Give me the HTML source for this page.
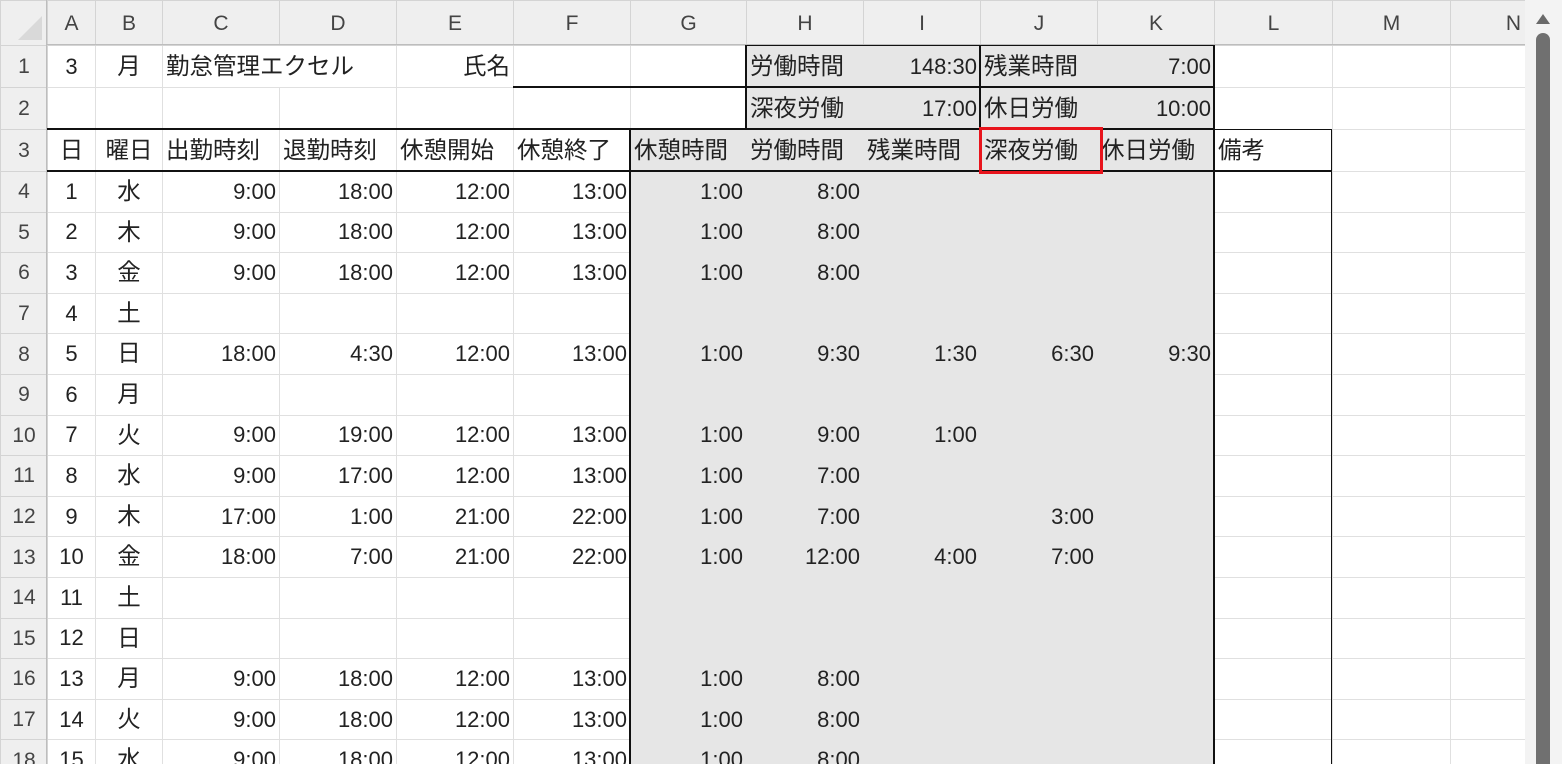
<!DOCTYPE html>
<html><head><meta charset="utf-8"><style>
*{margin:0;padding:0;box-sizing:border-box}
html,body{width:1562px;height:764px;overflow:hidden}
body{background:#fff;position:relative;font-family:"Liberation Sans","Noto Sans CJK JP",sans-serif;color:#222}
table{position:absolute;left:0;top:0;border-collapse:collapse;table-layout:fixed;width:1525px}
td{border:1px solid #e0e0e0;font-size:22px;padding:0 3px;white-space:nowrap;overflow:hidden;vertical-align:middle;line-height:1}
td.r{text-align:right}
td.c{text-align:center}
tr.h td{background:#efefef;color:#444;text-align:center;border-color:#d4d4d4;font-size:21px}
td.rh{background:#efefef;color:#444;text-align:center;border-color:#d4d4d4;font-size:21px;padding:0}
td.g{background:#e6e6e6;border-color:#e6e6e6}
.j{font-size:23.5px;letter-spacing:0}
.b{position:absolute;background:#111}
</style></head><body>
<table>
<colgroup><col style="width:47px"><col style="width:48px"><col style="width:67px"><col style="width:117px"><col style="width:117px"><col style="width:117px"><col style="width:117px"><col style="width:116px"><col style="width:117px"><col style="width:117px"><col style="width:117px"><col style="width:117px"><col style="width:118px"><col style="width:118px"><col style="width:75px"></colgroup>
<tr class="h" style="height:45px"><td style="background:#efefef"></td><td>A</td><td>B</td><td>C</td><td>D</td><td>E</td><td>F</td><td>G</td><td>H</td><td>I</td><td>J</td><td>K</td><td>L</td><td>M</td><td style="text-align:right;padding-right:4px">N</td></tr>
<tr style="height:42px"><td class="rh">1</td><td class="c">3</td><td class="c j">月</td><td class="j" colspan="2">勤怠管理エクセル</td><td class="r j">氏名</td><td></td><td></td><td class="g j">労働時間</td><td class="g r">148:30</td><td class="g j">残業時間</td><td class="g r">7:00</td><td></td><td></td><td></td></tr>
<tr style="height:42px"><td class="rh">2</td><td></td><td></td><td></td><td></td><td></td><td></td><td></td><td class="g j">深夜労働</td><td class="g r">17:00</td><td class="g j">休日労働</td><td class="g r">10:00</td><td></td><td></td><td></td></tr>
<tr style="height:42px"><td class="rh">3</td><td class="c j">日</td><td class="c j">曜日</td><td class="j">出勤時刻</td><td class="j">退勤時刻</td><td class="j">休憩開始</td><td class="j">休憩終了</td><td class="g j">休憩時間</td><td class="g j">労働時間</td><td class="g j">残業時間</td><td class="g j">深夜労働</td><td class="g j">休日労働</td><td class="j">備考</td><td></td><td></td></tr>
<tr style="height:40.6px"><td class="rh">4</td><td class="c">1</td><td class="c j">水</td><td class="r">9:00</td><td class="r">18:00</td><td class="r">12:00</td><td class="r">13:00</td><td class="g r">1:00</td><td class="g r">8:00</td><td class="g"></td><td class="g"></td><td class="g"></td><td></td><td></td><td></td></tr>
<tr style="height:40.6px"><td class="rh">5</td><td class="c">2</td><td class="c j">木</td><td class="r">9:00</td><td class="r">18:00</td><td class="r">12:00</td><td class="r">13:00</td><td class="g r">1:00</td><td class="g r">8:00</td><td class="g"></td><td class="g"></td><td class="g"></td><td></td><td></td><td></td></tr>
<tr style="height:40.6px"><td class="rh">6</td><td class="c">3</td><td class="c j">金</td><td class="r">9:00</td><td class="r">18:00</td><td class="r">12:00</td><td class="r">13:00</td><td class="g r">1:00</td><td class="g r">8:00</td><td class="g"></td><td class="g"></td><td class="g"></td><td></td><td></td><td></td></tr>
<tr style="height:40.6px"><td class="rh">7</td><td class="c">4</td><td class="c j">土</td><td></td><td></td><td></td><td></td><td class="g"></td><td class="g"></td><td class="g"></td><td class="g"></td><td class="g"></td><td></td><td></td><td></td></tr>
<tr style="height:40.6px"><td class="rh">8</td><td class="c">5</td><td class="c j">日</td><td class="r">18:00</td><td class="r">4:30</td><td class="r">12:00</td><td class="r">13:00</td><td class="g r">1:00</td><td class="g r">9:30</td><td class="g r">1:30</td><td class="g r">6:30</td><td class="g r">9:30</td><td></td><td></td><td></td></tr>
<tr style="height:40.6px"><td class="rh">9</td><td class="c">6</td><td class="c j">月</td><td></td><td></td><td></td><td></td><td class="g"></td><td class="g"></td><td class="g"></td><td class="g"></td><td class="g"></td><td></td><td></td><td></td></tr>
<tr style="height:40.6px"><td class="rh">10</td><td class="c">7</td><td class="c j">火</td><td class="r">9:00</td><td class="r">19:00</td><td class="r">12:00</td><td class="r">13:00</td><td class="g r">1:00</td><td class="g r">9:00</td><td class="g r">1:00</td><td class="g"></td><td class="g"></td><td></td><td></td><td></td></tr>
<tr style="height:40.6px"><td class="rh">11</td><td class="c">8</td><td class="c j">水</td><td class="r">9:00</td><td class="r">17:00</td><td class="r">12:00</td><td class="r">13:00</td><td class="g r">1:00</td><td class="g r">7:00</td><td class="g"></td><td class="g"></td><td class="g"></td><td></td><td></td><td></td></tr>
<tr style="height:40.6px"><td class="rh">12</td><td class="c">9</td><td class="c j">木</td><td class="r">17:00</td><td class="r">1:00</td><td class="r">21:00</td><td class="r">22:00</td><td class="g r">1:00</td><td class="g r">7:00</td><td class="g"></td><td class="g r">3:00</td><td class="g"></td><td></td><td></td><td></td></tr>
<tr style="height:40.6px"><td class="rh">13</td><td class="c">10</td><td class="c j">金</td><td class="r">18:00</td><td class="r">7:00</td><td class="r">21:00</td><td class="r">22:00</td><td class="g r">1:00</td><td class="g r">12:00</td><td class="g r">4:00</td><td class="g r">7:00</td><td class="g"></td><td></td><td></td><td></td></tr>
<tr style="height:40.6px"><td class="rh">14</td><td class="c">11</td><td class="c j">土</td><td></td><td></td><td></td><td></td><td class="g"></td><td class="g"></td><td class="g"></td><td class="g"></td><td class="g"></td><td></td><td></td><td></td></tr>
<tr style="height:40.6px"><td class="rh">15</td><td class="c">12</td><td class="c j">日</td><td></td><td></td><td></td><td></td><td class="g"></td><td class="g"></td><td class="g"></td><td class="g"></td><td class="g"></td><td></td><td></td><td></td></tr>
<tr style="height:40.6px"><td class="rh">16</td><td class="c">13</td><td class="c j">月</td><td class="r">9:00</td><td class="r">18:00</td><td class="r">12:00</td><td class="r">13:00</td><td class="g r">1:00</td><td class="g r">8:00</td><td class="g"></td><td class="g"></td><td class="g"></td><td></td><td></td><td></td></tr>
<tr style="height:40.6px"><td class="rh">17</td><td class="c">14</td><td class="c j">火</td><td class="r">9:00</td><td class="r">18:00</td><td class="r">12:00</td><td class="r">13:00</td><td class="g r">1:00</td><td class="g r">8:00</td><td class="g"></td><td class="g"></td><td class="g"></td><td></td><td></td><td></td></tr>
<tr style="height:40.6px"><td class="rh">18</td><td class="c">15</td><td class="c j">水</td><td class="r">9:00</td><td class="r">18:00</td><td class="r">12:00</td><td class="r">13:00</td><td class="g r">1:00</td><td class="g r">8:00</td><td class="g"></td><td class="g"></td><td class="g"></td><td></td><td></td><td></td></tr>
</table>
<div class="b" style="left:513px;top:86px;width:233px;height:2px"></div>
<div class="b" style="left:745px;top:44px;width:470px;height:2px"></div>
<div class="b" style="left:745px;top:86px;width:470px;height:2px"></div>
<div class="b" style="left:745px;top:128px;width:470px;height:2px"></div>
<div class="b" style="left:745px;top:44px;width:2px;height:86px"></div>
<div class="b" style="left:979px;top:44px;width:2px;height:86px"></div>
<div class="b" style="left:47px;top:128px;width:699px;height:2px"></div>
<div class="b" style="left:1214px;top:129px;width:118px;height:1px"></div>
<div class="b" style="left:47px;top:170px;width:1285px;height:2px"></div>
<div class="b" style="left:629px;top:129px;width:2px;height:640px"></div>
<div class="b" style="left:1213px;top:44px;width:2px;height:725px"></div>
<div class="b" style="left:1331px;top:129px;width:1px;height:640px"></div>
<div style="position:absolute;left:979px;top:127px;width:124px;height:47px;border:3px solid #e8141c"></div>
<div style="position:absolute;left:47px;top:44px;width:1478px;height:1px;background:#bdbdbd"></div>
<div style="position:absolute;left:46px;top:0;width:1px;height:764px;background:#bdbdbd"></div>
<svg style="position:absolute;left:14px;top:12px" width="30" height="30"><polygon points="28,4 28,28 4,28" fill="#d9d9d9"/></svg>
<div style="position:absolute;left:1525px;top:0;width:37px;height:764px;background:#f3f3f3"></div>
<div style="position:absolute;left:1536px;top:33px;width:14px;height:740px;background:#707070;border-radius:7px"></div>
<svg style="position:absolute;left:1535px;top:12px" width="16" height="14"><polygon points="8,2 15,12 1,12" fill="#6a6a6a"/></svg>
</body></html>
